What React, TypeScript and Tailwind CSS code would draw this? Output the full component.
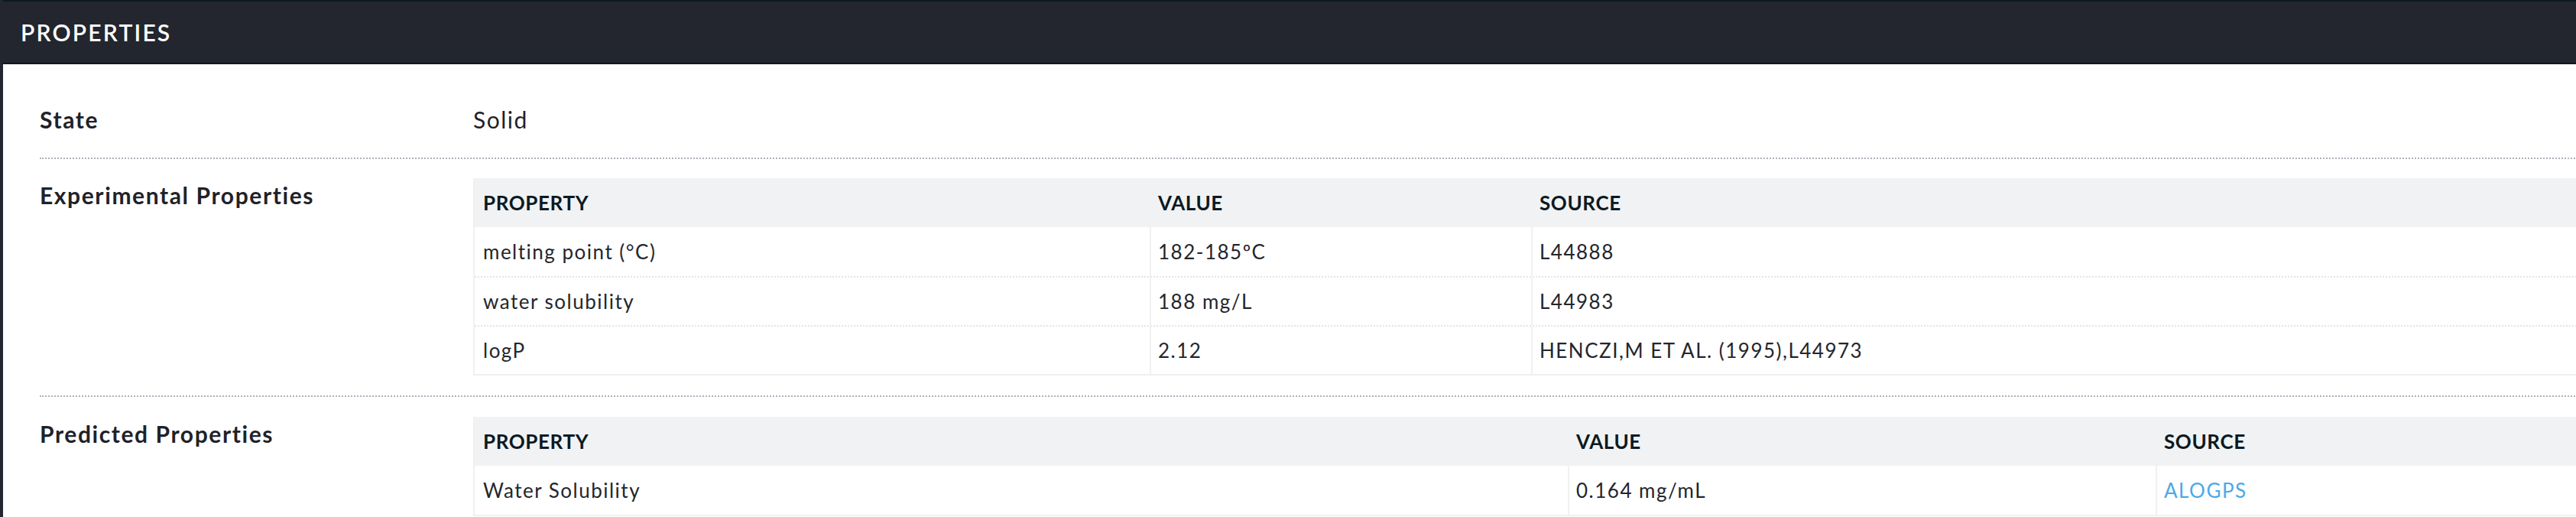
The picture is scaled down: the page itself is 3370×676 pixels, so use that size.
import React from "react";

type Row = { property: string; value: string; source: string; link?: boolean };

const experimental: Row[] = [
  { property: "melting point (°C)", value: "182-185ºC", source: "L44888" },
  { property: "water solubility", value: "188 mg/L", source: "L44983" },
  { property: "logP", value: "2.12", source: "HENCZI,M ET AL. (1995),L44973" },
];

const predicted: Row[] = [
  { property: "Water Solubility", value: "0.164 mg/mL", source: "ALOGPS", link: true },
];

function PropTable({ rows, cols }: { rows: Row[]; cols: string }) {
  return (
    <div className="border-l-2 border-b-2 border-[#eef0f2] w-[2840px] text-[26px]">
      {/* header */}
      <div className={`grid ${cols} h-[64px] items-center bg-[#f1f2f4] font-bold text-[#0b1a22] uppercase tracking-[0.6px]`}>
        <div className="pl-[11px]">Property</div>
        <div className="pl-[11px]">Value</div>
        <div className="pl-[11px]">Source</div>
      </div>
      {rows.map((r, i) => (
        <div
          key={r.property}
          className={`grid ${cols} h-[64px] font-normal text-[#23262c] tracking-[1.5px] ${i > 0 ? "border-t-2 border-dotted border-[#e2e4e8]" : ""}`}
        >
          <div className="flex items-center pl-[11px]">{r.property}</div>
          <div className="flex items-center pl-[9px] border-l-2 border-[#eef0f2]">{r.value}</div>
          <div className="flex items-center pl-[9px] border-l-2 border-[#eef0f2]">
            {r.link ? <a className="text-[#4aa9e9]">{r.source}</a> : r.source}
          </div>
        </div>
      ))}
    </div>
  );
}

export default function App() {
  return (
    <div className="w-[3370px] h-[676px] overflow-hidden bg-white font-['Lato',sans-serif]">
      <div className="w-[3440px] h-full border-l-4 border-[#23262e]">
        {/* Card header */}
        <div className="h-[84px] bg-[#23262e] border-t-2 border-b-2 border-[#0b1a20] flex items-center pl-[23px] text-white text-[30px] font-semibold tracking-[2.2px]">
          PROPERTIES
        </div>

        {/* Definition list */}
        <div className="pl-[48px] pt-[23px] text-[30px] text-[#1f2229]">
          <div className="flex pt-[25px] pb-[26px] border-b-2 border-dotted border-[#adb1ba]">
            <div className="w-[567px] shrink-0 font-bold leading-[48px] tracking-[1.6px]">State</div>
            <div className="font-normal leading-[48px] tracking-[1.5px]">Solid</div>
          </div>

          <div className="flex pt-[25px] pb-[26px] border-b-2 border-dotted border-[#adb1ba]">
            <div className="w-[567px] shrink-0 font-bold leading-[45px] tracking-[1.6px]">Experimental Properties</div>
            <PropTable rows={experimental} cols="grid-cols-[883px_499px_1458px]" />
          </div>

          <div className="flex pt-[26px] pb-[26px] border-b-2 border-dotted border-[#adb1ba]">
            <div className="w-[567px] shrink-0 font-bold leading-[45px] tracking-[1.6px]">Predicted Properties</div>
            <PropTable rows={predicted} cols="grid-cols-[1430px_769px_641px]" />
          </div>
        </div>
      </div>
    </div>
  );
}
